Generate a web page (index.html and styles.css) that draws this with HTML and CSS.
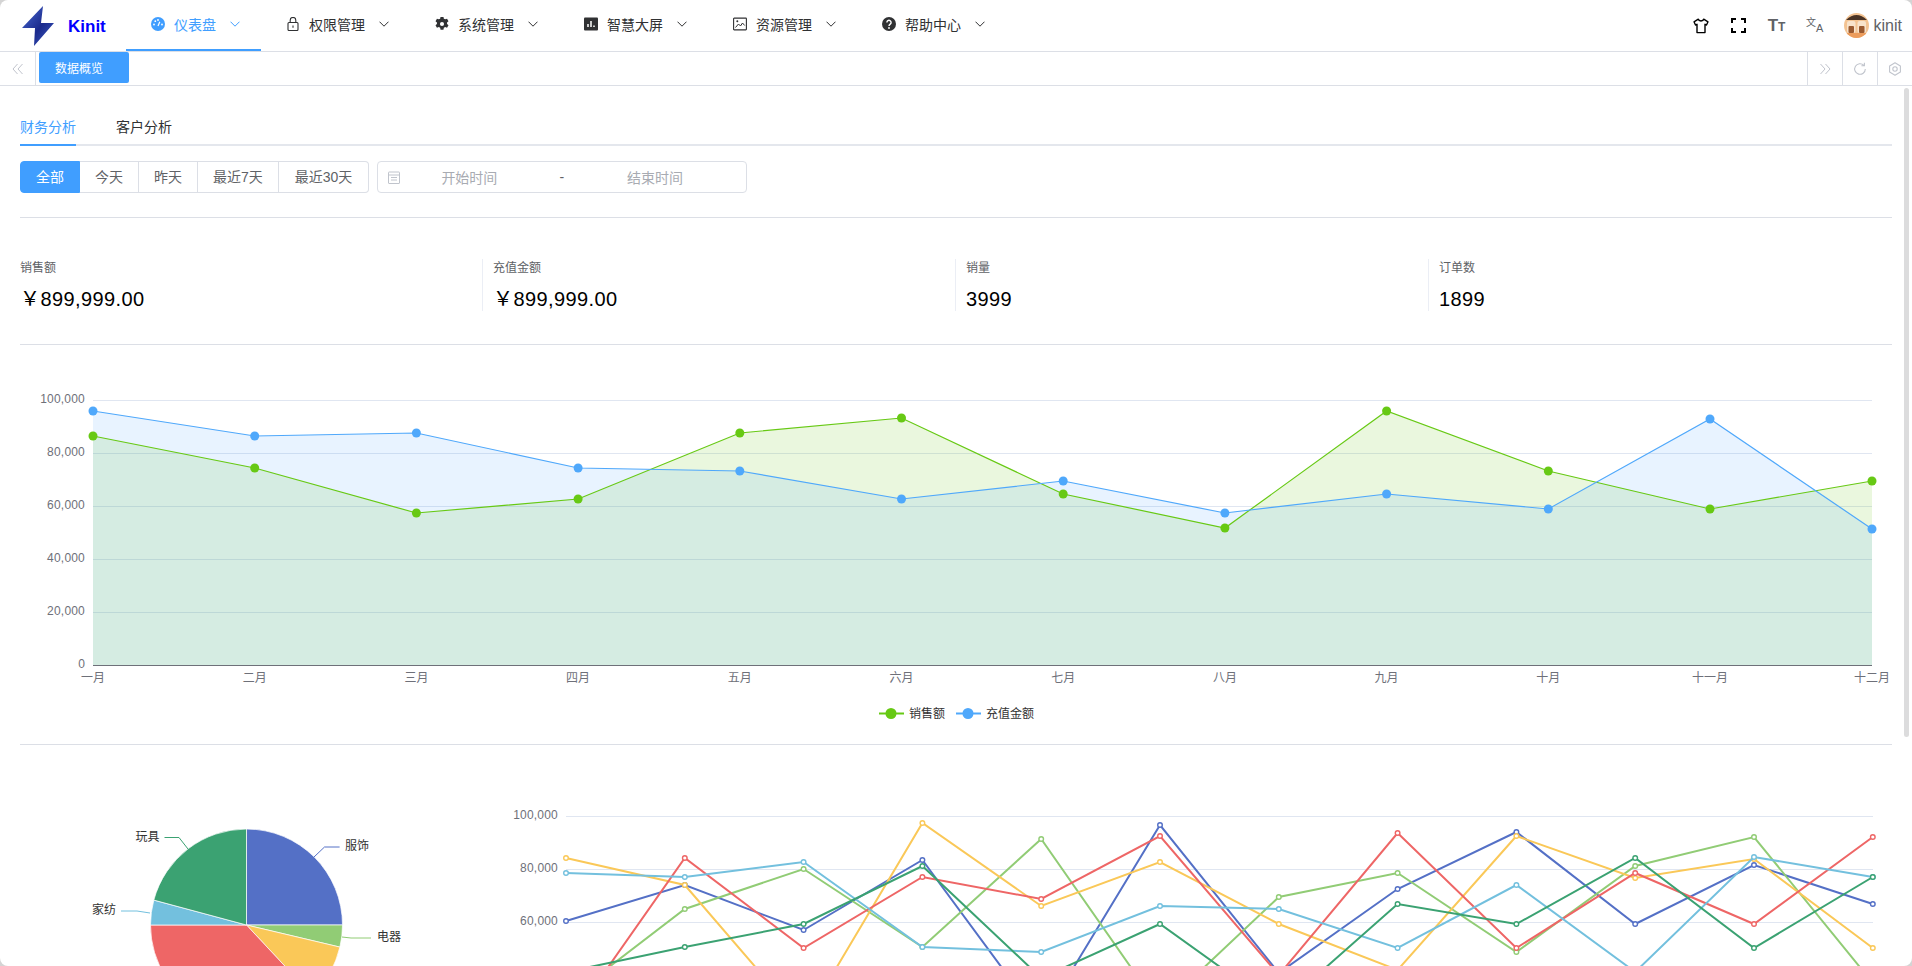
FILE: index.html
```html
<!DOCTYPE html>
<html lang="zh-CN">
<head>
    <meta charset="UTF-8">
    <title>Kinit</title>
    <link rel="stylesheet" href="styles.css">
</head>
<body>
<div class="app">
    <header class="header">
        <div class="logo">
            <svg class="logo-mark" width="32" height="40" viewBox="0 0 32 40">
                <defs>
                    <linearGradient id="bolt" x1="0" y1="0" x2="1" y2="1">
                        <stop offset="0" stop-color="#4a6cd4"/>
                        <stop offset="0.55" stop-color="#1b2a8c"/>
                        <stop offset="1" stop-color="#3f5fc8"/>
                    </linearGradient>
                </defs>
                <polygon points="21,0 0,22 13,22 12,40 32,17 19,17" fill="url(#bolt)"/>
            </svg>
            <span class="logo-text">Kinit</span>
        </div>
        <nav class="nav">
            <a class="nav-item active">
                <svg class="nav-icon" viewBox="0 0 14 14"><circle cx="7" cy="7" r="7" fill="#409eff"/><path d="M7 9 8.800 4.800" stroke="#fff" stroke-width="1.200"/><circle cx="3" cy="7.500" r=".9" fill="#fff"/><circle cx="4.300" cy="4.200" r=".9" fill="#fff"/><circle cx="7" cy="3" r=".9" fill="#fff"/><circle cx="11" cy="7.500" r=".9" fill="#fff"/></svg>
                <span>仪表盘</span>
                <svg class="chevron" viewBox="0 0 10 6"><path d="M.5.7 5 5.2 9.5.7" fill="none" stroke="currentColor"/></svg>
            </a>
            <a class="nav-item">
                <svg class="nav-icon" viewBox="0 0 14 14"><rect x="2" y="5.500" width="10" height="8" rx="1" fill="none" stroke="#303133" stroke-width="1.100"/><path d="M4.200 5.500V3.200a2.800 2.800 0 0 1 5.600 0v2.300" fill="none" stroke="#303133" stroke-width="1.100"/><path d="M7 8.500v2.200" stroke="#303133" stroke-width="1.100"/></svg>
                <span>权限管理</span>
                <svg class="chevron" viewBox="0 0 10 6"><path d="M.5.7 5 5.200 9.500.7" fill="none" stroke="currentColor"/></svg>
            </a>
            <a class="nav-item">
                <svg class="nav-icon" viewBox="0.700 0.200 12.600 13.600"><path fill-rule="evenodd" fill="#303133" d="M5.600 0h2.800l.4 1.800 1.300.7 1.800-.6 1.400 2.400-1.400 1.200v1.500l1.400 1.200-1.400 2.400-1.800-.6-1.300.7-.4 1.800H5.600l-.4-1.800-1.300-.7-1.800.6L.7 8.200l1.400-1.200V5.500L.7 4.300l1.400-2.400 1.800.6 1.300-.7zM7 5a2 2 0 1 0 0 4 2 2 0 0 0 0-4z"/></svg>
                <span>系统管理</span>
                <svg class="chevron" viewBox="0 0 10 6"><path d="M.5.7 5 5.200 9.500.7" fill="none" stroke="currentColor"/></svg>
            </a>
            <a class="nav-item">
                <svg class="nav-icon" viewBox="0 0 14 14"><rect x="0" y="0.500" width="14" height="13" rx="1" fill="#303133"/><path d="M4 10V7M7 10V4M10 10V8.500" stroke="#fff" stroke-width="1.500"/></svg>
                <span>智慧大屏</span>
                <svg class="chevron" viewBox="0 0 10 6"><path d="M.5.7 5 5.200 9.500.7" fill="none" stroke="currentColor"/></svg>
            </a>
            <a class="nav-item">
                <svg class="nav-icon" viewBox="0 0 14 14"><rect x=".6" y="1.100" width="12.800" height="11.800" rx=".6" fill="none" stroke="#303133" stroke-width="1.100"/><path d="M2.500 10.500 5.500 7l2 2 2-3 2.200 2.500" fill="none" stroke="#303133"/><circle cx="4.300" cy="4.300" r="1" fill="#303133"/></svg>
                <span>资源管理</span>
                <svg class="chevron" viewBox="0 0 10 6"><path d="M.5.7 5 5.200 9.500.7" fill="none" stroke="currentColor"/></svg>
            </a>
            <a class="nav-item">
                <svg class="nav-icon" viewBox="0 0 14 14"><circle cx="7" cy="7" r="7" fill="#303133"/><path d="M4.900 5.400a2.100 2.100 0 1 1 3.300 1.700C7.400 7.700 7 8 7 9" fill="none" stroke="#fff" stroke-width="1.400"/><circle cx="7" cy="11" r=".9" fill="#fff"/></svg>
                <span>帮助中心</span>
                <svg class="chevron" viewBox="0 0 10 6"><path d="M.5.7 5 5.200 9.500.7" fill="none" stroke="currentColor"/></svg>
            </a>
        </nav>
        <div class="tools">
            <span class="tool">
                <svg width="16" height="16" viewBox="0 0 16 16"><path d="M5.300 1.200 1 3.800l1.500 3.200 1.500-.7v8.300h8V6.300l1.500.7L15 3.800l-4.300-2.600C10.300 3.500 5.700 3.500 5.300 1.200z" fill="none" stroke="#000" stroke-width="1.400" stroke-linejoin="round"/></svg>
            </span>
            <span class="tool">
                <svg width="15" height="15" viewBox="0 0 15 15"><path d="M1 5V1h4M10 1h4v4M14 10v4h-4M5 14H1v-4" fill="none" stroke="#000" stroke-width="2"/></svg>
            </span>
            <span class="tool font-size">T<small>T</small></span>
            <span class="tool lang"><span class="lang-zh">文</span><span class="lang-en">A</span></span>
            <svg class="avatar" width="25" height="25" viewBox="0 0 25 25">
                <defs><clipPath id="round"><circle cx="12.500" cy="12.500" r="12.500"/></clipPath></defs>
                <g clip-path="url(#round)">
                    <rect width="25" height="25" fill="#f3c392"/>
                    <path d="M2 7Q12.500-3 23 7Z" fill="#4a3325"/>
                    <rect x="3" y="8" width="8.500" height="12" rx="2" fill="#f8e3cb"/>
                    <rect x="13.500" y="8" width="8.500" height="12" rx="2" fill="#f8e3cb"/>
                    <rect x="4.500" y="13" width="5.500" height="7" rx="1" fill="#9a5a30"/>
                    <rect x="15" y="13" width="5.500" height="7" rx="1" fill="#9a5a30"/>
                    <rect y="20" width="25" height="5" fill="#ec9c5c"/>
                </g>
            </svg>
            <span class="user-name">kinit</span>
        </div>
    </header>

    <div class="tags-bar">
        <span class="tags-cell first">
            <svg width="12" height="12" viewBox="0 0 12 12"><path d="M5.500 1 1 6l4.500 5M10.500 1 6 6l4.500 5" fill="none" stroke="#c0c4cc"/></svg>
        </span>
        <span class="tag-active">数据概览</span>
        <span class="tags-cell push">
            <svg width="12" height="12" viewBox="0 0 12 12"><path d="M1.500 1 6 6l-4.500 5M6.500 1 11 6l-4.500 5" fill="none" stroke="#c0c4cc"/></svg>
        </span>
        <span class="tags-cell">
            <svg width="14" height="14" viewBox="0 0 14 14"><path d="M12.300 7a5.300 5.300 0 1 1-1.500-3.700M11.400 .8v3h-3" fill="none" stroke="#c0c4cc" stroke-width="1.100"/></svg>
        </span>
        <span class="tags-cell">
            <svg width="14" height="14" viewBox="0 0 14 14"><path d="M7 .8 12.400 3.900v6.200L7 13.200 1.600 10.100V3.900z" fill="none" stroke="#c0c4cc" stroke-width="1.100" stroke-linejoin="round"/><circle cx="7" cy="7" r="2.200" fill="none" stroke="#c0c4cc" stroke-width="1.100"/></svg>
        </span>
    </div>

    <main class="main">
        <div class="tabs">
            <span class="tab active">财务分析</span>
            <span class="tab">客户分析</span>
        </div>

        <div class="filters">
            <div class="radio-group">
                <span class="radio active">全部</span>
                <span class="radio">今天</span>
                <span class="radio">昨天</span>
                <span class="radio">最近7天</span>
                <span class="radio">最近30天</span>
            </div>
            <div class="date-range">
                <svg width="12" height="13" viewBox="0 0 12 13"><rect x=".5" y="1" width="11" height="11.500" rx=".5" fill="none" stroke="#c0c4cc"/><path d="M.5 4h11M3 6.500h6M3 9h6" stroke="#c0c4cc"/></svg>
                <span class="date-text start">开始时间</span>
                <span class="date-sep">-</span>
                <span class="date-text end">结束时间</span>
            </div>
        </div>

        <div class="divider"></div>

        <div class="stats">
            <div class="stat">
                <div class="stat-title">销售额</div>
                <div class="stat-value">￥899,999.00</div>
            </div>
            <div class="stat">
                <div class="stat-title">充值金额</div>
                <div class="stat-value">￥899,999.00</div>
            </div>
            <div class="stat">
                <div class="stat-title">销量</div>
                <div class="stat-value">3999</div>
            </div>
            <div class="stat">
                <div class="stat-title">订单数</div>
                <div class="stat-value">1899</div>
            </div>
        </div>

        <div class="divider tight"></div>

        <svg class="chart" width="1872" height="399" viewBox="20 345 1872 399">
            <defs>
                <marker id="dot-green" markerUnits="userSpaceOnUse" markerWidth="12" markerHeight="12" refX="6" refY="6"><circle cx="6" cy="6" r="4.500" fill="#67c914"/></marker>
                <marker id="dot-blue" markerUnits="userSpaceOnUse" markerWidth="12" markerHeight="12" refX="6" refY="6"><circle cx="6" cy="6" r="4.500" fill="#4fa8fb"/></marker>
            </defs>
            <path class="grid" d="M93 400.500H1872M93 453.500H1872M93 506.500H1872M93 559.500H1872M93 612.500H1872"/>
            <polygon class="area-green" points="93,665 93,436 254.700,468 416.400,513 578.100,499 739.800,433 901.500,418 1063.200,494 1224.900,528 1386.600,411 1548.300,471 1710,509 1872,481 1872,665"/>
            <polygon class="area-blue" points="93,665 93,411 254.700,436 416.400,433 578.100,468 739.800,471 901.500,499 1063.200,481 1224.900,513 1386.600,494 1548.300,509 1710,419 1872,529 1872,665"/>
            <path class="axis" d="M93 665.500H1872"/>
            <polyline class="line-green" points="93,436 254.700,468 416.400,513 578.100,499 739.800,433 901.500,418 1063.200,494 1224.900,528 1386.600,411 1548.300,471 1710,509 1872,481"/>
            <polyline class="line-blue" points="93,411 254.700,436 416.400,433 578.100,468 739.800,471 901.500,499 1063.200,481 1224.900,513 1386.600,494 1548.300,509 1710,419 1872,529"/>
            <g class="y-labels">
                <text x="85" y="403">100,000</text>
                <text x="85" y="456">80,000</text>
                <text x="85" y="509">60,000</text>
                <text x="85" y="562">40,000</text>
                <text x="85" y="615">20,000</text>
                <text x="85" y="668">0</text>
            </g>
            <g class="x-labels">
                <text x="93" y="682">一月</text>
                <text x="254.700" y="682">二月</text>
                <text x="416.400" y="682">三月</text>
                <text x="578.100" y="682">四月</text>
                <text x="739.800" y="682">五月</text>
                <text x="901.500" y="682">六月</text>
                <text x="1063.200" y="682">七月</text>
                <text x="1224.900" y="682">八月</text>
                <text x="1386.600" y="682">九月</text>
                <text x="1548.300" y="682">十月</text>
                <text x="1710" y="682">十一月</text>
                <text x="1872" y="682">十二月</text>
            </g>
            <g class="legend">
                <path d="M879 713.500H904" stroke="#67c914" stroke-width="2"/>
                <circle cx="891" cy="713.500" r="5.500" fill="#67c914"/>
                <text x="909" y="718">销售额</text>
                <path d="M956 713.500H981" stroke="#4fa8fb" stroke-width="2"/>
                <circle cx="968" cy="713.500" r="5.500" fill="#4fa8fb"/>
                <text x="986" y="718">充值金额</text>
            </g>
        </svg>

        <div class="divider tight"></div>

        <div class="charts-row">
            <svg class="chart" width="480" height="221" viewBox="20 745 480 221">
                <g class="pie">
                    <path fill="#5470c6" d="M246.500 925V829A96 96 0 0 1 342.500 925Z"/>
                    <path fill="#91cc75" d="M246.500 925H342.500A96 96 0 0 1 339.900 947.100Z"/>
                    <path fill="#fac858" d="M246.500 925 339.900 947.100A96 96 0 0 1 312 995.200Z"/>
                    <path fill="#ee6666" d="M246.500 925 312 995.200A96 96 0 0 1 150.500 925Z"/>
                    <path fill="#73c0de" d="M246.500 925H150.500A96 96 0 0 1 153.800 900.100Z"/>
                    <path fill="#3ba272" d="M246.500 925 153.800 900.100A96 96 0 0 1 246.500 829Z"/>
                </g>
                <g class="pie-lines">
                    <polyline stroke="#5470c6" points="314,857 324.500,847 339.600,847"/>
                    <polyline stroke="#91cc75" points="342,937 351,938 371,938"/>
                    <polyline stroke="#3ba272" points="188,849 179,837.500 164.500,837.500"/>
                    <polyline stroke="#73c0de" points="150,913 137,911 121,911"/>
                </g>
                <g class="pie-labels">
                    <text x="345" y="850">服饰</text>
                    <text x="377" y="941">电器</text>
                    <text x="135.500" y="841">玩具</text>
                    <text x="92" y="914">家纺</text>
                </g>
            </svg>
            <svg class="chart" width="1392" height="221" viewBox="500 745 1392 221">
                <defs>
                    <marker id="ring-1" markerUnits="userSpaceOnUse" markerWidth="8" markerHeight="8" refX="4" refY="4"><circle cx="4" cy="4" r="2.300" fill="#fff" stroke="#5470c6" stroke-width="1.400"/></marker>
                    <marker id="ring-2" markerUnits="userSpaceOnUse" markerWidth="8" markerHeight="8" refX="4" refY="4"><circle cx="4" cy="4" r="2.300" fill="#fff" stroke="#91cc75" stroke-width="1.400"/></marker>
                    <marker id="ring-3" markerUnits="userSpaceOnUse" markerWidth="8" markerHeight="8" refX="4" refY="4"><circle cx="4" cy="4" r="2.300" fill="#fff" stroke="#fac858" stroke-width="1.400"/></marker>
                    <marker id="ring-4" markerUnits="userSpaceOnUse" markerWidth="8" markerHeight="8" refX="4" refY="4"><circle cx="4" cy="4" r="2.300" fill="#fff" stroke="#ee6666" stroke-width="1.400"/></marker>
                    <marker id="ring-5" markerUnits="userSpaceOnUse" markerWidth="8" markerHeight="8" refX="4" refY="4"><circle cx="4" cy="4" r="2.300" fill="#fff" stroke="#73c0de" stroke-width="1.400"/></marker>
                    <marker id="ring-6" markerUnits="userSpaceOnUse" markerWidth="8" markerHeight="8" refX="4" refY="4"><circle cx="4" cy="4" r="2.300" fill="#fff" stroke="#3ba272" stroke-width="1.400"/></marker>
                </defs>
                <path class="grid plain" d="M566 816.500H1873M566 869.500H1873M566 922.500H1873"/>
                <g class="y-labels">
                    <text x="558" y="819">100,000</text>
                    <text x="558" y="872">80,000</text>
                    <text x="558" y="925">60,000</text>
                </g>
                <polyline class="series s1" points="566,921 684.800,885 803.600,930 922.400,860 1041.200,1021 1160,825 1278.800,973 1397.600,889 1516.400,832 1635.200,924 1754,865 1872.800,904"/>
                <polyline class="series s2" points="566,1000 684.800,909 803.600,869 922.400,947 1041.200,839 1160,1009 1278.800,897 1397.600,873 1516.400,952 1635.200,866 1754,837 1872.800,983"/>
                <polyline class="series s3" points="566,858 684.800,885 803.600,1023 922.400,823 1041.200,906 1160,862 1278.800,924 1397.600,970 1516.400,836 1635.200,878 1754,859 1872.800,948"/>
                <polyline class="series s4" points="566,1027 684.800,858 803.600,948 922.400,877 1041.200,899 1160,836 1278.800,975 1397.600,833 1516.400,948 1635.200,873 1754,924 1872.800,837"/>
                <polyline class="series s5" points="566,873 684.800,877 803.600,862 922.400,947 1041.200,952 1160,906 1278.800,909 1397.600,948 1516.400,885 1635.200,972 1754,857 1872.800,877"/>
                <polyline class="series s6" points="566,972 684.800,947 803.600,924 922.400,866 1041.200,978 1160,924 1278.800,1009 1397.600,904 1516.400,924 1635.200,858 1754,948 1872.800,877"/>
            </svg>
        </div>

        <div class="scroll-thumb"></div>
    </main>
</div>
</body>
</html>
```

FILE: styles.css
```css
* {
    box-sizing: border-box;
}

html, body {
    margin: 0;
    height: 100%;
    overflow: hidden;
}

body {
    background: #d4d4d4;
    font-family: "Liberation Sans", "Noto Sans CJK SC", sans-serif;
    font-size: 14px;
    color: #303133;
}

.app {
    display: flex;
    flex-direction: column;
    height: 966px;
    background: #fff;
    border-radius: 8px;
    overflow: hidden;
}

/* header */
.header {
    display: flex;
    align-items: center;
    height: 52px;
    flex-shrink: 0;
    border-bottom: 1px solid #dcdfe6;
}

.logo {
    display: flex;
    align-items: center;
    width: 126px;
    height: 100%;
    padding-left: 22px;
}

.logo-text {
    margin-left: 14px;
    margin-top: 2px;
    font-size: 17px;
    font-weight: bold;
    color: #0000ff;
}

.nav {
    display: flex;
    height: 100%;
}

.nav-item {
    display: flex;
    align-items: center;
    height: 51px;
    padding: 0 21px 1px 25px;
    margin-bottom: -1px;
    border-bottom: 2px solid transparent;
}

.nav-item.active {
    color: #409eff;
    border-bottom-color: #409eff;
}

.nav-icon {
    width: 14px;
    height: 14px;
    margin-right: 9px;
}

.chevron {
    width: 10px;
    height: 6px;
    margin-left: 14px;
}

.tools {
    display: flex;
    align-items: center;
    margin-left: auto;
    padding-right: 10px;
}

.tool {
    display: flex;
    align-items: center;
    justify-content: center;
    width: 38px;
}

.font-size {
    font-size: 17px;
    font-weight: bold;
    color: #606266;
    align-items: baseline;
}

.font-size small {
    font-size: 12px;
}

.lang {
    align-items: flex-start;
    height: 17px;
    color: #606266;
}

.lang-zh {
    font-size: 10px;
    line-height: 11px;
}

.lang-en {
    margin-top: 6px;
    font-size: 11px;
    line-height: 11px;
}

.avatar {
    margin-left: 10px;
}

.user-name {
    margin-left: 5px;
    font-size: 16px;
    color: #606266;
}

/* tags bar */
.tags-bar {
    display: flex;
    align-items: center;
    height: 34px;
    flex-shrink: 0;
    border-bottom: 1px solid #dcdfe6;
}

.tags-cell {
    display: flex;
    align-items: center;
    justify-content: center;
    width: 35px;
    height: 100%;
    border-left: 1px solid #dcdfe6;
}

.tags-cell.first {
    width: 36px;
    border-left: 0;
    border-right: 1px solid #dcdfe6;
}

.tags-cell.push {
    margin-left: auto;
}

.tag-active {
    display: flex;
    align-items: center;
    width: 90px;
    height: 31px;
    margin: 0 0 2px 3px;
    padding-left: 16px;
    font-size: 12px;
    color: #fff;
    background: #409eff;
    border-radius: 2px;
}

/* main */
.main {
    position: relative;
    flex: 1;
    min-height: 0;
    padding: 20px 20px 0;
    overflow: hidden;
}

.tabs {
    display: flex;
    gap: 40px;
    height: 40px;
    margin-bottom: 15px;
    border-bottom: 2px solid #e4e7ed;
}

.tab {
    height: 40px;
    line-height: 42px;
}

.tab.active {
    color: #409eff;
    border-bottom: 2px solid #409eff;
}

.filters {
    display: flex;
    gap: 8px;
}

.radio-group {
    display: flex;
}

.radio {
    height: 32px;
    line-height: 30px;
    padding: 0 15px;
    color: #606266;
    border: 1px solid #dcdfe6;
    border-left: 0;
}

.radio:last-child {
    padding: 0 16px;
    border-radius: 0 4px 4px 0;
}

.radio.active {
    color: #fff;
    background: #409eff;
    border: 1px solid #409eff;
    border-radius: 4px 0 0 4px;
}

.date-range {
    display: flex;
    align-items: center;
    width: 370px;
    height: 32px;
    padding-left: 10px;
    border: 1px solid #dcdfe6;
    border-radius: 4px;
}

.date-text {
    color: #a8abb2;
}

.date-text.start {
    margin-left: 41px;
}

.date-sep {
    margin-left: 62px;
    color: #606266;
}

.date-text.end {
    margin-left: 63px;
}

.divider {
    height: 1px;
    margin-top: 24px;
    background: #dcdfe6;
}

.divider.tight {
    margin-top: 0;
}

.stats {
    display: grid;
    grid-template-columns: repeat(4, 1fr);
    height: 52px;
    margin: 41px -10px 33px;
}

.stat {
    padding: 0 10px;
    border-right: 1px solid #ebeef5;
}

.stat:last-child {
    border-right: 0;
}

.stat-title {
    height: 18px;
    line-height: 18px;
    font-size: 12px;
    color: #606266;
}

.stat-value {
    margin-top: 10px;
    line-height: 24px;
    font-size: 20px;
    letter-spacing: 0.4px;
    color: #000;
}

/* charts */
.chart {
    display: block;
    flex-shrink: 0;
    font-size: 12px;
}

.chart:first-of-type {
    overflow: visible;
}

.grid {
    fill: none;
    stroke: #e0e6f1;
}

.axis {
    fill: none;
    stroke: #6e7079;
}

.area-green {
    fill: #67c914;
    fill-opacity: 0.14;
}

.area-blue {
    fill: #409eff;
    fill-opacity: 0.12;
}

.line-green,
.line-blue {
    fill: none;
    stroke-width: 1.200;
}

.line-green {
    stroke: #67c914;
    marker: url(#dot-green);
}

.line-blue {
    stroke: #4fa8fb;
    marker: url(#dot-blue);
}

.y-labels text {
    fill: #6e7079;
    text-anchor: end;
    letter-spacing: 0.2px;
}

.x-labels text {
    fill: #6e7079;
    text-anchor: middle;
}

.legend text,
.pie-labels text {
    fill: #333;
}

.charts-row {
    display: flex;
}

.pie path {
    stroke: #fff;
    stroke-width: 0.700;
}

.pie-lines polyline {
    fill: none;
}

.series {
    fill: none;
    stroke-width: 2;
}

.s1 { stroke: #5470c6; marker: url(#ring-1); }
.s2 { stroke: #91cc75; marker: url(#ring-2); }
.s3 { stroke: #fac858; marker: url(#ring-3); }
.s4 { stroke: #ee6666; marker: url(#ring-4); }
.s5 { stroke: #73c0de; marker: url(#ring-5); }
.s6 { stroke: #3ba272; marker: url(#ring-6); }

.scroll-thumb {
    position: absolute;
    top: 2px;
    right: 3px;
    width: 5px;
    height: 649px;
    background: #dcdcdd;
    border-radius: 3px;
}
```
